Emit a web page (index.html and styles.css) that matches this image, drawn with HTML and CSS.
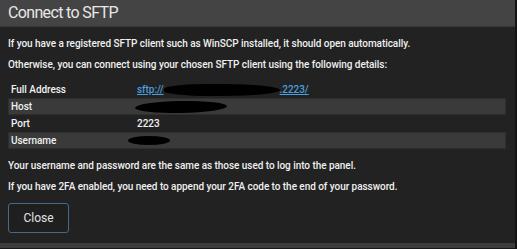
FILE: index.html
```html
<!DOCTYPE html>
<html>
<head>
<meta charset="utf-8">
<link rel="stylesheet" href="styles.css">
</head>
<body>
<div class="modal">
  <div class="modal-header">Connect to SFTP</div>
  <div class="modal-body">
    <p class="line">If you have a registered SFTP client such as WinSCP installed, it should open automatically.</p>
    <p class="line">Otherwise, you can connect using your chosen SFTP client using the following details:</p>
    <div class="details">
      <div class="row">
        <div class="label">Full Address</div>
        <div class="value"><a class="link" href="#">sftp://<span class="redact r-addr"></span>.2223/</a></div>
      </div>
      <div class="row striped">
        <div class="label">Host</div>
        <div class="value"><span class="redact r-host"></span></div>
      </div>
      <div class="row">
        <div class="label">Port</div>
        <div class="value">2223</div>
      </div>
      <div class="row striped">
        <div class="label">Username</div>
        <div class="value"><span class="redact r-user"></span></div>
      </div>
    </div>
    <p class="line note">Your username and password are the same as those used to log into the panel.</p>
    <p class="line">If you have 2FA enabled, you need to append your 2FA code to the end of your password.</p>
    <button class="btn">Close</button>
  </div>
  <div class="modal-footer"></div>
</div>
</body>
</html>
```

FILE: styles.css
```css
html, body {
  margin: 0;
  padding: 0;
  background: #222222;
}
body {
  width: 517px;
  height: 249px;
  overflow: hidden;
  font-family: Roboto, "Liberation Sans", sans-serif;
  color: #f0f0f0;
}
.modal {
  width: 515px;
  height: 249px;
  border-right: 2px solid #141414;
  display: flex;
  flex-direction: column;
  background: #222222;
}
.modal-header {
  height: 26px;
  background: #444444;
  border-bottom: 1px solid #363636;
  color: #e8e8e8;
  font-size: 16px;
  letter-spacing: -0.65px;
  line-height: 26px;
  padding-left: 8px;
}
.modal-body {
  flex: 1;
  padding: 0 8px;
  font-size: 10px;
  font-weight: 500;
  letter-spacing: -0.05px;
}
.line {
  margin: 0;
  height: 21px;
  line-height: 21px;
}
.modal-body > .line:first-child {
  margin-top: 6px;
}
.details {
  margin-top: 6px;
  margin-right: 1px;
}
.row {
  display: flex;
  height: 17px;
  line-height: 17px;
  box-sizing: border-box;
}
.row.striped {
  background: #3a3a3a;
  border: 1px solid #2e2e2e;
  line-height: 15px;
}
.label {
  width: 126px;
  padding-left: 3px;
}
.row.striped .label {
  padding-left: 2px;
}
.value {
  flex: 1;
  display: flex;
  align-items: center;
}
.link {
  color: #4a9fdf;
  text-decoration: underline;
  display: flex;
  align-items: center;
}
.redact {
  display: inline-block;
  background: #000;
  border-radius: 50%;
}
.r-addr {
  width: 116px;
  height: 12px;
  border-radius: 40% 50% 50% 40%;
}
.r-host {
  width: 92px;
  height: 12px;
  margin-left: -2px;
  transform: rotate(-1deg);
}
.r-user {
  width: 42px;
  height: 9px;
  margin-left: -9px;
}
.note {
  margin-top: 6px;
}
.btn {
  margin-top: 6px;
  width: 61px;
  height: 30px;
  background: #1f1f1f;
  border: 1px solid #46698a;
  border-radius: 3px;
  color: #e2e2e2;
  font-family: Roboto, "Liberation Sans", sans-serif;
  font-size: 12px;
  padding: 0;
}
.modal-footer {
  height: 5px;
  background: #3c3c3c;
  border-bottom: 1px solid #181818;
}
```
